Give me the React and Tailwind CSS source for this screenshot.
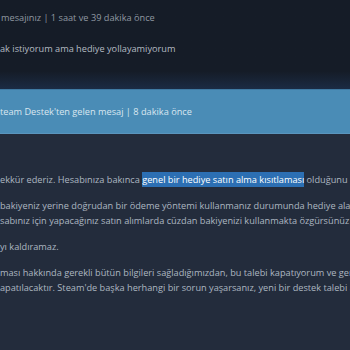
export default function App() {
  const font = { fontFamily: '"Open Sans", "Liberation Sans", sans-serif' };
  return (
    <div className="w-[350px] h-[350px] overflow-hidden flex flex-col text-[9.2px]" style={font}>
      <div className="h-[89px] shrink-0 flex flex-col bg-[#151c27] bg-gradient-to-b from-[#151c27] from-80% to-[#1b2b44]">
        <div className="h-[36px] leading-[36px] whitespace-nowrap text-[#8f98a1] pl-[1px]">mesajınız | 1 saat ve 39 dakika önce</div>
        <div className="h-[26px] leading-[26px] whitespace-nowrap text-[#b4bbc2]">ak istiyorum ama hediye yollayamiyorum</div>
      </div>
      <div className="h-[45px] shrink-0 leading-[43px] whitespace-nowrap bg-[#4a8cb6] border-t border-t-[#3f7aa3] border-b border-b-[#5a95bd] text-[#dae7f0]">team Destek'ten gelen mesaj | 8 dakika önce</div>
      <div className="flex-1 bg-[#232c3c] text-[#adb7c1] whitespace-nowrap flex flex-col">
        <div className="h-[38px]" />
        <div className="h-[15px] leading-[15px]">ekkür ederiz. Hesabınıza bakınca <span className="bg-[#2c6fb3] text-white py-[1px]">genel bir hediye satın alma kısıtlaması</span> olduğunu</div>
        <div className="h-[11px]" />
        <div className="h-[15px] leading-[15px]">bakiyeniz yerine doğrudan bir ödeme yöntemi kullanmanız durumunda hediye alabilirsiniz</div>
        <div className="h-[15px] leading-[15px]">sabınız için yapacağınız satın alımlarda cüzdan bakiyenizi kullanmakta özgürsünüz</div>
        <div className="h-[11px]" />
        <div className="h-[15px] leading-[15px]">yı kaldıramaz.</div>
        <div className="h-[11px]" />
        <div className="h-[15px] leading-[15px]">ması hakkında gerekli bütün bilgileri sağladığımızdan, bu talebi kapatıyorum ve gerekirse</div>
        <div className="h-[15px] leading-[15px]">apatılacaktır. Steam'de başka herhangi bir sorun yaşarsanız, yeni bir destek talebi açın</div>
      </div>
    </div>
  );
}
